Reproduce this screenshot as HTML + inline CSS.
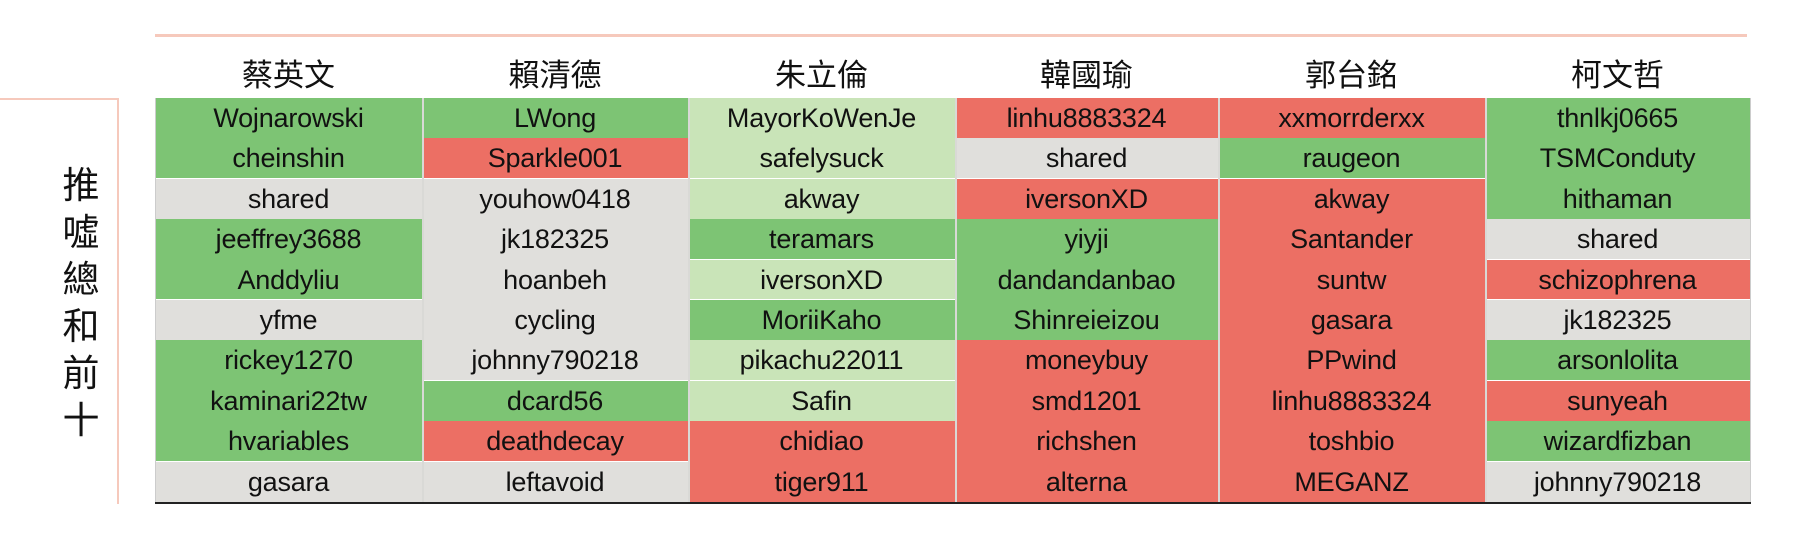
<!DOCTYPE html><html><head><meta charset="utf-8"><style>
body{margin:0;width:1804px;height:552px;background:#fff;position:relative;overflow:hidden;font-family:"Liberation Sans","Noto Sans CJK TC",sans-serif;}
.a{position:absolute}
.h{position:absolute;top:56px;height:40px;font-size:31px;text-align:center;color:#111;line-height:40px}
.s{position:absolute}
.t{position:absolute;text-align:center;font-size:27px;line-height:40px;color:#111;height:40px;letter-spacing:-0.2px}
</style></head><body>
<div class="a" style="left:155px;top:34px;width:1592px;height:3px;background:#f6c9bc"></div>
<div class="a" style="left:0;top:98px;width:119px;height:406px;border-top:2px solid #f6c9bc;border-right:2px solid #f6c9bc;box-sizing:border-box"></div>
<div class="a" style="left:58px;top:162px;width:46px;font-size:37px;line-height:47px;text-align:center;color:#111">推<br>噓<br>總<br>和<br>前<br>十</div>
<div id="g"></div>
<script>
const X=[155,422,688,955,1218,1485,1750];
const H=["蔡英文","賴清德","朱立倫","韓國瑜","郭台銘","柯文哲"];
const G="#7dc474",R="#ec6f64",Y="#e0dfdc",L="#c9e4b8";
const D=[
[["Wojnarowski",G],["cheinshin",G],["shared",Y],["jeeffrey3688",G],["Anddyliu",G],["yfme",Y],["rickey1270",G],["kaminari22tw",G],["hvariables",G],["gasara",Y]],
[["LWong",G],["Sparkle001",R],["youhow0418",Y],["jk182325",Y],["hoanbeh",Y],["cycling",Y],["johnny790218",Y],["dcard56",G],["deathdecay",R],["leftavoid",Y]],
[["MayorKoWenJe",L],["safelysuck",L],["akway",L],["teramars",G],["iversonXD",L],["MoriiKaho",G],["pikachu22011",L],["Safin",L],["chidiao",R],["tiger911",R]],
[["linhu8883324",R],["shared",Y],["iversonXD",R],["yiyji",G],["dandandanbao",G],["Shinreieizou",G],["moneybuy",R],["smd1201",R],["richshen",R],["alterna",R]],
[["xxmorrderxx",R],["raugeon",G],["akway",R],["Santander",R],["suntw",R],["gasara",R],["PPwind",R],["linhu8883324",R],["toshbio",R],["MEGANZ",R]],
[["thnlkj0665",G],["TSMConduty",G],["hithaman",G],["shared",Y],["schizophrena",R],["jk182325",Y],["arsonlolita",G],["sunyeah",R],["wizardfizban",G],["johnny790218",Y]]];
let h="";const T=98,RH=40.4;
for(let c=0;c<6;c++){const x=X[c]+(c?2:0),w=X[c+1]-X[c]-(c?2:0);
h+=`<div class="h" style="left:${X[c]}px;width:${X[c+1]-X[c]}px">${H[c]}</div>`;
for(let r=0;r<10;r++){const[n,col]=D[c][r];const y=T+r*RH;
const nxt=r<9?D[c][r+1][1]:null;const sep=(col===L&&nxt===L)||(nxt&&nxt!==col)?1:0;
h+=`<div class="s" style="left:${x}px;top:${y}px;width:${w}px;height:${RH-sep+0.5}px;background:${col}"></div>`;
h+=`<div class="t" style="left:${X[c]}px;top:${y}px;width:${X[c+1]-X[c]}px">${n}</div>`;}
if(c)h+=`<div class="s" style="left:${X[c]}px;top:${T}px;width:2px;height:406px;background:#d9d9d6"></div>`;}
h+=`<div class="s" style="left:155px;top:${T}px;width:1px;height:406px;background:#ccc"></div>`;
h+=`<div class="s" style="left:1750px;top:${T}px;width:1px;height:406px;background:#ccc"></div>`;
h+=`<div class="s" style="left:155px;top:502px;width:1596px;height:2px;background:#222"></div>`;
document.getElementById("g").innerHTML=h;
</script>
</body></html>
